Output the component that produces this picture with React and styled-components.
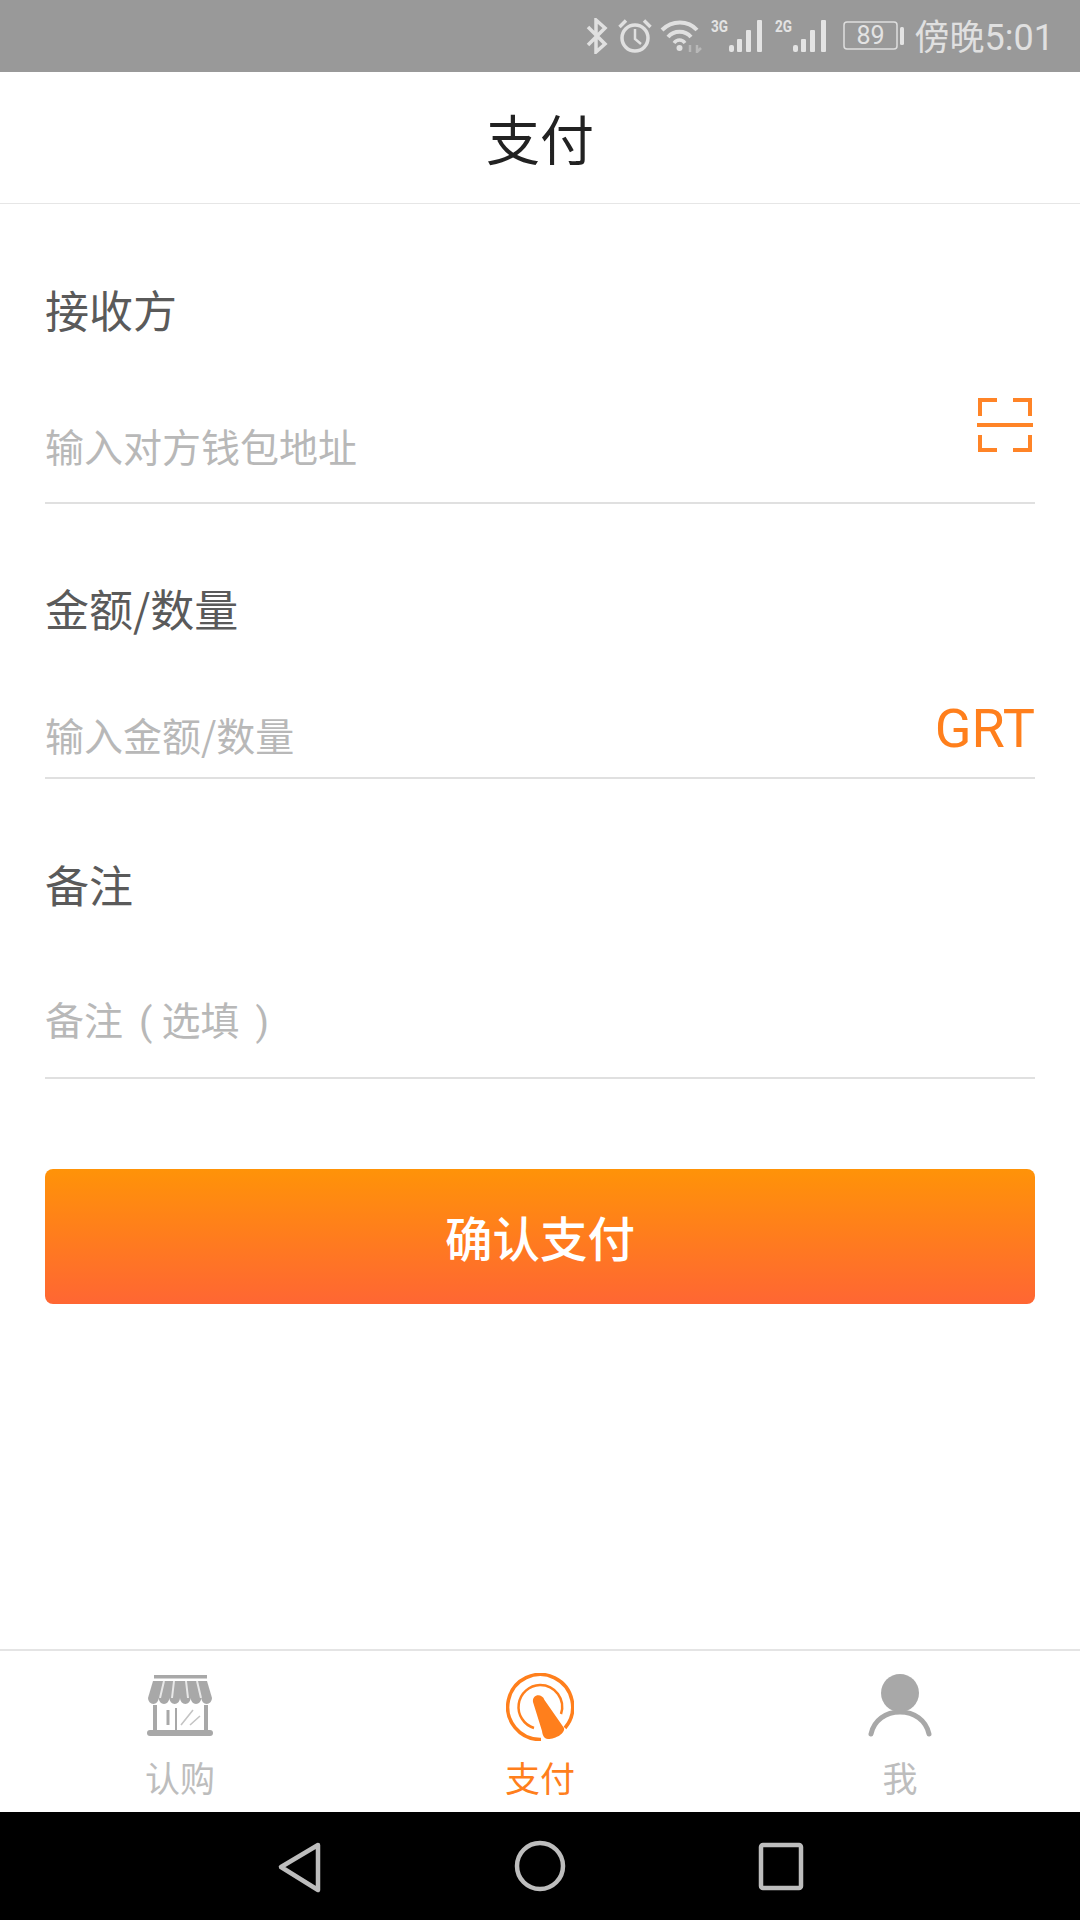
import React from "react";
import styled, { createGlobalStyle } from "styled-components";

const Global = createGlobalStyle`
  html, body { margin: 0; padding: 0; background: #fff; }
  * { box-sizing: border-box; }
  body { font-family: "Noto Sans CJK SC", Roboto, sans-serif; }
`;
const Page = styled.div`
  width: 1080px; height: 1920px; display: flex; flex-direction: column; background: #fff; overflow: hidden;
`;
const StatusBar = styled.div`
  height: 72px; flex: none; background: #999; display: flex; align-items: center; justify-content: flex-end; padding: 0 26px 0 0; color: #e3e3e3;
`;
const StatusSvg = styled.svg`
  display: block; flex: none; margin-left: ${p => p.$ml || 0}px;
`;
const Clock = styled.span`
  font-size: 35px; line-height: 72px; margin-left: 10px; white-space: nowrap; color: #e0e0e0;
  font-family: "Noto Sans CJK SC", sans-serif;
`;
const ClockDigits = styled.span`
  font-family: Roboto, sans-serif; font-size: 36px;
`;
const Header = styled.header`
  height: 132px; flex: none; display: flex; align-items: center; justify-content: center; border-bottom: 1px solid #e6e6e6;
  font-size: 54px; color: #222;
`;
const Form = styled.main`
  flex: 1; padding: 0 45px; display: flex; flex-direction: column;
`;
const Label = styled.div`
  font-size: 44px; line-height: 60px; height: 60px; color: #5a5a5a; margin-top: ${p => p.$mt}px;
`;
const Row = styled.div`
  height: ${p => p.$h}px; border-bottom: 2px solid #e0e0e0; display: flex; align-items: flex-end; justify-content: space-between;
`;
const Placeholder = styled.span`
  font-size: 39px; line-height: 56px; color: #b8b8b8; padding-bottom: ${p => p.$pb}px; white-space: nowrap;
`;
const Paren = styled.span`
  font-family: Roboto, sans-serif; margin: 0 9px 0 16px;
`;
const Unit = styled.span`
  font-family: Roboto, sans-serif; font-size: 54px; line-height: 60px; color: #ff7f1c; padding-bottom: 18px;
`;
const ScanIcon = styled.svg`
  display: block; margin-bottom: 50px; margin-right: 2px;
`;
const PayButton = styled.button`
  margin-top: 90px; height: 135px; width: 100%; border: 0; border-radius: 8px; color: #fff; font-size: 47.5px; font-weight: 500;
  font-family: inherit; background: linear-gradient(180deg, #ff9308 0%, #ff6633 100%); padding: 0;
`;
const TabBar = styled.nav`
  height: 163px; flex: none; border-top: 2px solid #e4e4e4; display: grid; grid-template-columns: repeat(3, 1fr); background: #fff;
`;
const Tab = styled.div`
  display: flex; flex-direction: column; align-items: center; color: ${p => p.$active ? "#ff7f1c" : "#bdbdbd"};
`;
const IconSlot = styled.div`
  height: 102px; flex: none; display: flex; justify-content: center; padding-top: ${p => p.$top}px;
`;
const TabIcon = styled.svg`
  display: block; flex: none;
`;
const TabLabel = styled.span`
  font-size: 35px; line-height: 48px;
`;
const NavBar = styled.div`
  height: 108px; flex: none; background: #000; display: flex; align-items: center; justify-content: center;
`;
const NavSvg = styled.svg`
  display: block; flex: none;
`;

const Bluetooth = () => (
  <StatusSvg width="22" height="36" viewBox="0 0 22 36" fill="none" stroke="#e0e0e0" strokeWidth="3.5">
    <path d="M2 9 L19 26 L10 34 V2 L19 10 L2 27" />
  </StatusSvg>
);
const Alarm = () => (
  <StatusSvg $ml={10} width="34" height="36" viewBox="0 0 34 36" fill="none" stroke="#e0e0e0">
    <circle cx="17" cy="20" r="13" strokeWidth="3.5" />
    <path d="M17 11 V21 L23 26" strokeWidth="2.5" />
    <path d="M1.5 9 L8 2.5 M32.5 9 L26 2.5" strokeWidth="3.5" />
  </StatusSvg>
);
const Wifi = () => (
  <StatusSvg $ml={8} width="42" height="34" viewBox="0 0 42 34" fill="none">
    <path d="M2 11 C12 1 28 1 37 11" stroke="#e0e0e0" strokeWidth="4" />
    <path d="M8 18 C14 11 25 11 31 18" stroke="#e0e0e0" strokeWidth="4" />
    <path d="M14 24 C17 20 22 20 25 24" stroke="#e0e0e0" strokeWidth="3.5" />
    <circle cx="19.5" cy="29" r="3" fill="#e0e0e0" />
    <path d="M30 33 V26 M37 26 V33 L41 29" stroke="#b8b8b8" strokeWidth="2.5" />
  </StatusSvg>
);
const Signal = ({ label, ml }) => (
  <StatusSvg $ml={ml} width="52" height="44" viewBox="0 0 52 44">
    <text x="0" y="18" fontFamily="Roboto, sans-serif" fontSize="17" fontWeight="700" fill="#e3e3e3" textLength="17" lengthAdjust="spacingAndGlyphs">{label}</text>
    <rect x="18" y="31" width="5" height="7" rx="2" fill="#e3e3e3" />
    <rect x="26" y="25" width="5" height="13" rx="1" fill="#e3e3e3" />
    <rect x="35" y="16" width="5" height="22" rx="1" fill="#e3e3e3" />
    <rect x="46" y="6" width="5" height="32" rx="1" fill="#e3e3e3" />
  </StatusSvg>
);
const Battery = () => (
  <StatusSvg $ml={16} width="62" height="30" viewBox="0 0 62 30">
    <rect x="1" y="1" width="53" height="27" rx="3" fill="none" stroke="#dedede" strokeWidth="1.5" />
    <text x="27.5" y="23" textAnchor="middle" fontFamily="Roboto, sans-serif" fontSize="25" fill="#e3e3e3">89</text>
    <rect x="57" y="6" width="4" height="18" rx="1.5" fill="#e3e3e3" />
  </StatusSvg>
);

const Scan = () => (
  <ScanIcon width="56" height="54" viewBox="0 0 56 54" fill="none" stroke="#ff8427" strokeWidth="4">
    <path d="M20 2 H3 V18 M36 2 H53 V18 M3 37 V52 H20 M53 37 V52 H36" />
    <path d="M0 27 H56" />
  </ScanIcon>
);

const StoreIcon = () => (
  <TabIcon width="66" height="62" viewBox="0 0 66 62">
    <rect x="7" y="0" width="53" height="3.5" fill="#a8a8a8" />
    <path d="M6 6 H60 L65 23 H1 Z" fill="#a8a8a8" />
    <path d="M17 6 L13 23 M27 6 L25 23 M39 6 L41 23 M50 6 L54 23" stroke="#e8e8e8" strokeWidth="2" />
    <path d="M1 23 a5.33 6 0 0 0 10.66 0 a5.33 6 0 0 0 10.67 0 a5.33 6 0 0 0 10.67 0 a5.33 6 0 0 0 10.67 0 a5.33 6 0 0 0 10.67 0 a5.33 6 0 0 0 10.66 0 Z" fill="#a8a8a8" />
    <path d="M8 30 V56 M59 30 V56" stroke="#a8a8a8" strokeWidth="4" />
    <path d="M29 33 V56" stroke="#a8a8a8" strokeWidth="2" />
    <path d="M21 35 V50" stroke="#a8a8a8" strokeWidth="3" />
    <path d="M34 50 L46 35 M43 50 L53 41" stroke="#c4c4c4" strokeWidth="1.6" />
    <rect x="0" y="55" width="66" height="6" rx="3" fill="#a8a8a8" />
  </TabIcon>
);
const PayIcon = () => (
  <TabIcon width="68" height="68" viewBox="0 0 68 68" fill="none">
    <path d="M35 66.5 A32.5 32.5 0 1 1 59 55" stroke="#ff7f1c" strokeWidth="3.5" />
    <path d="M28 55 A22 22 0 0 1 34 12 A22 22 0 0 1 55 41" stroke="#ff7f1c" strokeWidth="2.5" />
    <path d="M27 29 C26 21 36 20 38.5 27 L58 55 C59.5 60 50 66 42 66 C38 66 36.5 62 36 58 Z" fill="#ff7f1c" />
  </TabIcon>
);
const PersonIcon = () => (
  <TabIcon width="64" height="66" viewBox="0 0 64 66" fill="none">
    <circle cx="32" cy="20" r="19" fill="#a8a8a8" />
    <path d="M3 61 C6 47 18 39 32 39 C46 39 58 47 61 61" stroke="#a8a8a8" strokeWidth="5" strokeLinecap="round" />
  </TabIcon>
);

export default function App() {
  return (
    <Page>
      <Global />
      <StatusBar>
        <Bluetooth />
        <Alarm />
        <Wifi />
        <Signal label="3G" ml={9} />
        <Signal label="2G" ml={12} />
        <Battery />
        <Clock>傍晚<ClockDigits>5:01</ClockDigits></Clock>
      </StatusBar>
      <Header>支付</Header>
      <Form>
        <Label $mt={75}>接收方</Label>
        <Row $h={165}>
          <Placeholder $pb={29}>输入对方钱包地址</Placeholder>
          <Scan />
        </Row>
        <Label $mt={74}>金额/数量</Label>
        <Row $h={141}>
          <Placeholder $pb={15}>输入金额/数量</Placeholder>
          <Unit>GRT</Unit>
        </Row>
        <Label $mt={75}>备注</Label>
        <Row $h={165}>
          <Placeholder $pb={27}>备注<Paren>(</Paren>选填<Paren>)</Paren></Placeholder>
        </Row>
        <PayButton>确认支付</PayButton>
      </Form>
      <TabBar>
        <Tab><IconSlot $top={24}><StoreIcon /></IconSlot><TabLabel>认购</TabLabel></Tab>
        <Tab $active><IconSlot $top={22}><PayIcon /></IconSlot><TabLabel>支付</TabLabel></Tab>
        <Tab><IconSlot $top={22}><PersonIcon /></IconSlot><TabLabel>我</TabLabel></Tab>
      </TabBar>
      <NavBar>
        <NavSvg width="530" height="108" viewBox="275 0 530 108" fill="none" stroke="#bdbdbd" strokeWidth="4.5" strokeLinejoin="round">
          <path d="M318 33 L281 55 L318 78 Z" />
          <circle cx="540" cy="54" r="23" />
          <rect x="761" y="33" width="40" height="43" rx="2" />
        </NavSvg>
      </NavBar>
    </Page>
  );
}
